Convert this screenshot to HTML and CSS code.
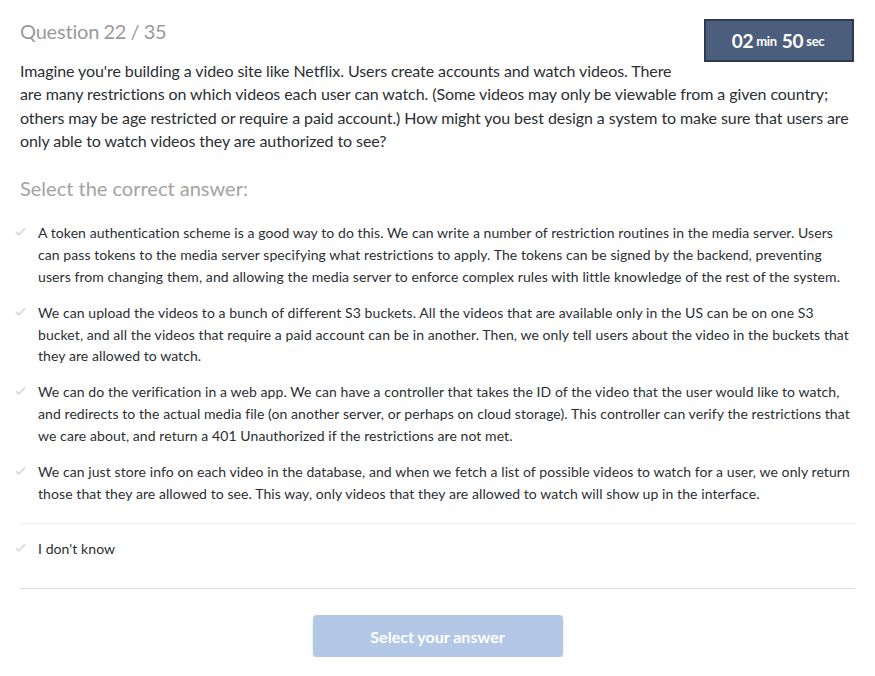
FILE: index.html
```html
<!DOCTYPE html>
<html>
<head>
<meta charset="utf-8">
<link rel="stylesheet" href="styles.css">
</head>
<body>
<div class="page">
  <div class="timer"><b>02</b> <small>min</small> <b>50</b> <small>sec</small></div>
  <h2 class="qnum">Question 22 / 35</h2>
  <p class="question">Imagine you're building a video site like Netflix. Users create accounts and watch videos. There are many restrictions on which videos each user can watch. (Some videos may only be viewable from a given country; others may be age restricted or require a paid account.) How might you best design a system to make sure that users are only able to watch videos they are authorized to see?</p>
  <h3 class="select">Select the correct answer:</h3>
  <ul class="options">
    <li class="opt"><svg class="check" viewBox="0 0 12 10"><path d="M1 5.5 L4.2 8.5 L11 1.5" /></svg><span>A token authentication scheme is a good way to do this. We can write a number of restriction routines in the media server. Users can pass tokens to the media server specifying what restrictions to apply. The tokens can be signed by the backend, preventing users from changing them, and allowing the media server to enforce complex rules with little knowledge of the rest of the system.</span></li>
    <li class="opt"><svg class="check" viewBox="0 0 12 10"><path d="M1 5.5 L4.2 8.5 L11 1.5" /></svg><span>We can upload the videos to a bunch of different S3 buckets. All the videos that are available only in the US can be on one S3 bucket, and all the videos that require a paid account can be in another. Then, we only tell users about the video in the buckets that they are allowed to watch.</span></li>
    <li class="opt"><svg class="check" viewBox="0 0 12 10"><path d="M1 5.5 L4.2 8.5 L11 1.5" /></svg><span>We can do the verification in a web app. We can have a controller that takes the ID of the video that the user would like to watch, and redirects to the actual media file (on another server, or perhaps on cloud storage). This controller can verify the restrictions that we care about, and return a 401 Unauthorized if the restrictions are not met.</span></li>
    <li class="opt"><svg class="check" viewBox="0 0 12 10"><path d="M1 5.5 L4.2 8.5 L11 1.5" /></svg><span>We can just store info on each video in the database, and when we fetch a list of possible videos to watch for a user, we only return those that they are allowed to see. This way, only videos that they are allowed to watch will show up in the interface.</span></li>
  </ul>
  <div class="idk"><svg class="check" viewBox="0 0 12 10"><path d="M1 5.5 L4.2 8.5 L11 1.5" /></svg><span>I don't know</span></div>
  <div class="actions"><button class="submit">Select your answer</button></div>
</div>
</body>
</html>
```
FILE: styles.css
```css
html, body { margin: 0; padding: 0; background: #fff; }
body { font-family: Lato, "Open Sans", sans-serif; color: #2b2f33; }
.page { padding: 18px 20px 0 20px; }
.timer {
  float: right;
  width: 146px;
  height: 39px;
  margin: 1px 1px 8px 20px;
  background: #4b5f7d;
  border: 2px solid #2b3a50;
  color: #fff;
  display: flex;
  align-items: center;
  justify-content: center;
  gap: 3px;
  font-size: 19px;
  letter-spacing: -0.3px;
}
.timer b { font-weight: 700; }
.timer small { font-size: 13px; font-weight: 700; margin-right: 2px; }
.qnum {
  margin: 0;
  font-size: 20px;
  font-weight: 400;
  color: #9a9a9a;
  line-height: 26px;
  letter-spacing: -0.2px;
  word-spacing: -0.6px;
}
.question {
  margin: 15px 0 0 0;
  font-size: 16px;
  line-height: 23.3px;
  letter-spacing: -0.08px;
}
.select {
  margin: 23px 0 0 0;
  font-size: 20px;
  font-weight: 400;
  color: #a3a3a3;
  line-height: 26px;
}
.options { list-style: none; margin: 21px 0 0 0; padding: 0; }
.opt, .idk {
  display: flex;
  align-items: flex-start;
  font-size: 14px;
  line-height: 21.8px;
  letter-spacing: 0.08px;
}
.opt + .opt { margin-top: 14.2px; }
.check {
  width: 11px;
  height: 9px;
  flex: none;
  margin: 5px 8px 0 -5px;
  fill: none;
  stroke: #dcdcdc;
  stroke-width: 2.2;
}
.opt span, .idk span { margin-left: 4px; }
.idk {
  margin-top: 18px;
  border-top: 1px solid #eeeeee;
  border-bottom: 1px solid #dddddd;
  padding: 14px 0 29px 0;
}
.actions { display: flex; justify-content: center; padding-top: 26px; }
.submit {
  width: 250px;
  height: 42px;
  border: none;
  border-radius: 4px;
  background: #b3c8e7;
  color: #fff;
  font-family: Lato, sans-serif;
  font-weight: 700;
  font-size: 16px;
  box-shadow: 0 2px 3px rgba(0,0,0,0.12);
}
```
